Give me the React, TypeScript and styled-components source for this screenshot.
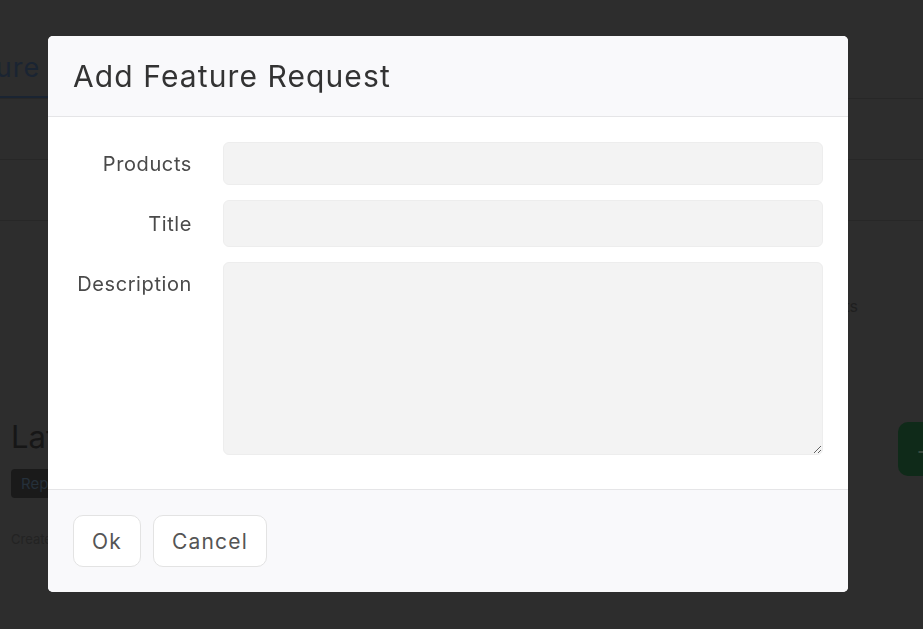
import React from "react";
import styled, { createGlobalStyle } from "styled-components";

const GlobalStyle = createGlobalStyle`
  html, body { margin: 0; padding: 0; }
  body {
    font-family: Inter, "Noto Sans", "DejaVu Sans", sans-serif;
    background: #2d2d2d;
    overflow: hidden;
  }
  * { box-sizing: border-box; }
`;

/* ---------- dimmed page behind the dialog ---------- */

const Page = styled.div`
  width: 923px;
  height: 629px;
  background: #2d2d2d;
  overflow: hidden;
  display: flex;
  flex-direction: column;
`;

const TabBar = styled.div`
  height: 99px;
  border-bottom: 1px solid #272727;
  display: flex;
  align-items: flex-end;
`;

const Tab = styled.div`
  margin-left: -63px;
  padding: 0 0 12px 0;
  border-bottom: 2px solid #1a2432;
  font-size: 27px;
  letter-spacing: 1px;
  color: #1a2432;
  white-space: nowrap;
  width: 111px;
  overflow: hidden;
`;

const Row = styled.div<{ $h: number; $line?: boolean }>`
  height: ${(p) => p.$h}px;
  border-bottom: ${(p) => (p.$line ? "1px solid #272727" : "none")};
  display: flex;
  align-items: center;
  justify-content: flex-end;
  padding-right: 65px;
`;

const Dim = styled.span`
  font-size: 16px;
  color: #1f1f1f;
`;

const Section = styled.div`
  padding: 28px 0 0 11px;
  display: flex;
  align-items: flex-start;
  justify-content: space-between;
`;

const SectionText = styled.div`
  display: flex;
  flex-direction: column;
  align-items: flex-start;
`;

const Heading = styled.div`
  font-size: 31px;
  color: #161616;
  line-height: 36px;
  white-space: nowrap;
`;

const Badge = styled.div`
  margin-top: 14px;
  background: #1a1a1a;
  color: #25303a;
  border-radius: 4px;
  padding: 4px 10px;
  font-size: 15px;
  line-height: 21px;
`;

const Meta = styled.div`
  margin-top: 33px;
  font-size: 13px;
  line-height: 16px;
  color: #232323;
  white-space: nowrap;
`;

const GreenButton = styled.div`
  margin-top: 3px;
  width: 60px;
  height: 54px;
  border-radius: 10px;
  background: #0f2a19;
  display: flex;
  align-items: center;
  padding-left: 18px;
  color: #3a4a3e;
  font-size: 26px;
  margin-right: -35px;
`;

/* ---------- dialog ---------- */

const Backdrop = styled.div`
  position: fixed;
  inset: 0;
  padding: 36px 0 0 48px;
`;

const Modal = styled.div`
  width: 800px;
  background: #ffffff;
  border-radius: 5px;
  overflow: hidden;
  display: flex;
  flex-direction: column;
`;

const Header = styled.div`
  height: 81px;
  background: #f9f9fb;
  border-bottom: 1px solid #e5e5e7;
  display: flex;
  align-items: center;
  padding: 0 25px;
`;

const Title = styled.h2`
  margin: 0;
  font-weight: 400;
  font-size: 30px;
  letter-spacing: 1.1px;
  color: #333;
`;

const Body = styled.div`
  padding: 25px 25px 34px 25px;
  display: grid;
  grid-template-columns: 119px 600px;
  column-gap: 31px;
  row-gap: 15px;
`;

const Label = styled.label<{ $top?: boolean }>`
  align-self: ${(p) => (p.$top ? "start" : "center")};
  padding-top: ${(p) => (p.$top ? "10px" : "0")};
  text-align: right;
  font-size: 20px;
  letter-spacing: 0.6px;
  line-height: 24px;
  color: #4a4a4a;
  white-space: nowrap;
`;

const Field = styled.div<{ $h: number }>`
  height: ${(p) => p.$h}px;
  background: #f3f3f3;
  border: 1px solid #ededed;
  border-radius: 6px;
`;

const TextArea = styled.textarea`
  display: block;
  width: 600px;
  height: 193px;
  background: #f3f3f3;
  border: 1px solid #ededed;
  border-radius: 6px;
  resize: vertical;
  font-family: inherit;
  outline: none;
`;

const Footer = styled.div`
  height: 103px;
  background: #f9f9fb;
  border-top: 1px solid #e5e5e7;
  display: flex;
  align-items: center;
  gap: 12px;
  padding: 0 25px;
`;

const Button = styled.button`
  height: 52px;
  padding: 0 18px;
  background: #ffffff;
  border: 1px solid #e3e3e3;
  border-radius: 10px;
  font-family: inherit;
  font-size: 21px;
  letter-spacing: 1.2px;
  color: #555;
  cursor: pointer;
`;

export default function App() {
  return (
    <>
      <GlobalStyle />
      <Page>
        <TabBar>
          <Tab>Feature Requests</Tab>
        </TabBar>
        <Row $h={61} $line />
        <Row $h={61} $line />
        <Row $h={170}>
          <Dim>Requests</Dim>
        </Row>
        <Section>
          <SectionText>
            <Heading>Latest Requests</Heading>
            <Badge>Reported</Badge>
            <Meta>Created by you</Meta>
          </SectionText>
          <GreenButton>+</GreenButton>
        </Section>
      </Page>
      <Backdrop>
        <Modal>
          <Header>
            <Title>Add Feature Request</Title>
          </Header>
          <Body>
            <Label>Products</Label>
            <Field $h={43} />
            <Label>Title</Label>
            <Field $h={47} />
            <Label $top>Description</Label>
            <TextArea />
          </Body>
          <Footer>
            <Button>Ok</Button>
            <Button>Cancel</Button>
          </Footer>
        </Modal>
      </Backdrop>
    </>
  );
}
